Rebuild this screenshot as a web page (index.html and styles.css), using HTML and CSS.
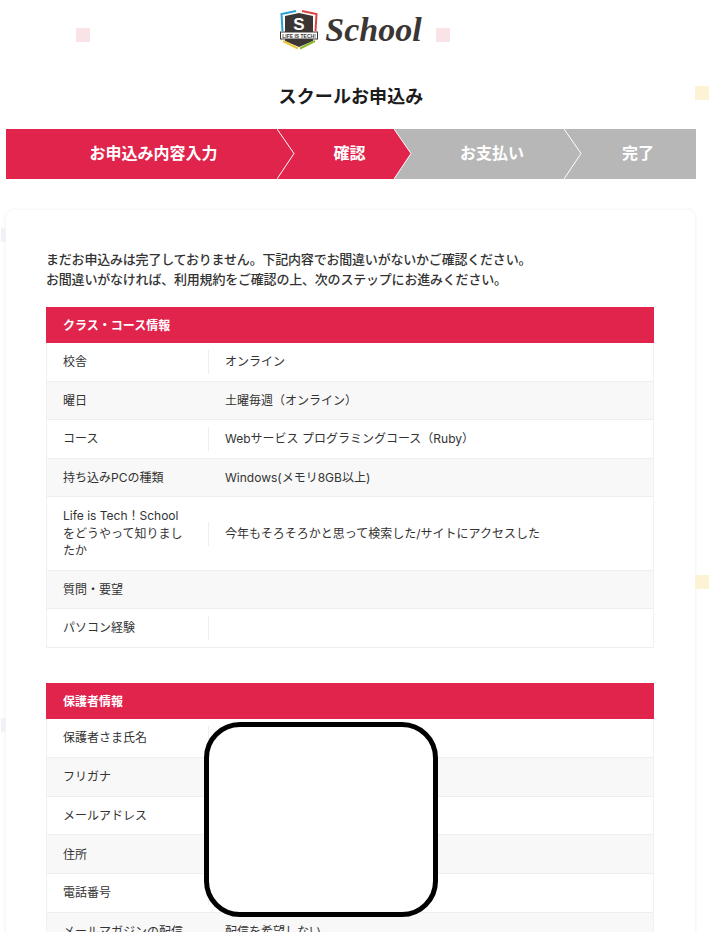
FILE: index.html
```html
<!DOCTYPE html>
<html lang="ja">
<head>
  <meta charset="UTF-8" />
  <meta name="viewport" content="width=device-width, initial-scale=1.0"/>
  <title>スクールお申込み</title>
  <link rel="stylesheet" href="styles.css">
</head>
<body>
  <!-- background confetti -->
  <span class="dot dot-pink dot-a"></span>
  <span class="dot dot-pink dot-b"></span>
  <span class="dot dot-cream dot-c"></span>
  <span class="dot dot-cream dot-d"></span>
  <span class="dot dot-grey dot-e"></span>
  <span class="dot dot-grey dot-f"></span>

  <div class="container">
    <header class="logo">
      <svg class="logo-mark" width="38" height="40" viewBox="0 0 38 40">
        <path d="M5 6 L19 3 L33 6 L33 31 L19 37 L5 31 Z" fill="#3b3634"/>
        <path d="M2.5 21 L1.5 4 L16 1" fill="none" stroke="#2a9fd6" stroke-width="2"/>
        <path d="M35.5 21 L36.5 4 L22 1" fill="none" stroke="#e0403f" stroke-width="2"/>
        <path d="M3 31 L18 38.5" fill="none" stroke="#f0c43a" stroke-width="2"/>
        <path d="M35 31 L20 38.5" fill="none" stroke="#8cb82b" stroke-width="2"/>
        <text x="19" y="19.5" class="logo-s">S</text>
        <rect x="0.5" y="22" width="37" height="7" fill="#fff" stroke="#3b3634"/>
        <text x="19" y="27.6" class="logo-small">LIFE IS TECH!</text>
      </svg>
      <span class="logo-word">School</span>
    </header>

    <h1>スクールお申込み</h1>

    <ol class="steps">
      <li class="step step-1 active">
        お申込み内容入力
        <svg class="tip" width="18" height="50" viewBox="0 0 18 50"><path d="M0 0 L17 24.5 L0 50 Z" fill="#e1244c"/><path d="M0 0 L17 24.5 L0 50" fill="none" stroke="#fff"/></svg>
      </li>
      <li class="step step-2 active">
        確認
        <svg class="tip" width="18" height="50" viewBox="0 0 18 50"><path d="M0 0 L17 24.5 L0 50 Z" fill="#e1244c"/><path d="M0 0 L17 24.5 L0 50" fill="none" stroke="#fff"/></svg>
      </li>
      <li class="step step-3">
        お支払い
        <svg class="tip" width="18" height="50" viewBox="0 0 18 50"><path d="M0 0 L17 24.5 L0 50 Z" fill="#b7b7b7"/><path d="M0 0 L17 24.5 L0 50" fill="none" stroke="#fff"/></svg>
      </li>
      <li class="step step-4">完了</li>
    </ol>

    <main class="card">
      <p class="lead">まだお申込みは完了しておりません。下記内容でお間違いがないかご確認ください。<br>お間違いがなければ、利用規約をご確認の上、次のステップにお進みください。</p>

      <section class="info">
        <h2>クラス・コース情報</h2>
        <div class="row"><div class="key">校舎</div><div class="val">オンライン</div></div>
        <div class="row"><div class="key">曜日</div><div class="val">土曜毎週（オンライン）</div></div>
        <div class="row"><div class="key">コース</div><div class="val">Webサービス プログラミングコース（Ruby）</div></div>
        <div class="row"><div class="key">持ち込みPCの種類</div><div class="val">Windows(メモリ8GB以上)</div></div>
        <div class="row"><div class="key">Life is Tech！School をどうやって知りましたか</div><div class="val">今年もそろそろかと思って検索した/サイトにアクセスした</div></div>
        <div class="row"><div class="key">質問・要望</div><div class="val"></div></div>
        <div class="row"><div class="key">パソコン経験</div><div class="val"></div></div>
      </section>

      <section class="info info-guardian">
        <h2>保護者情報</h2>
        <div class="row"><div class="key">保護者さま氏名</div><div class="val"></div></div>
        <div class="row"><div class="key">フリガナ</div><div class="val"></div></div>
        <div class="row"><div class="key">メールアドレス</div><div class="val"></div></div>
        <div class="row"><div class="key">住所</div><div class="val"></div></div>
        <div class="row"><div class="key">電話番号</div><div class="val"></div></div>
        <div class="row"><div class="key">メールマガジンの配信</div><div class="val">配信を希望しない</div></div>
      </section>
    </main>
  </div>

  <!-- hand drawn blank over the personal details -->
  <div class="redact"></div>
</body>
</html>
```

FILE: styles.css
```css
html, body {
  height: 932px;
  overflow: hidden;
}

body {
  position: relative;
  margin: 0;
  background: #fff;
  color: #333;
  font-family: "Noto Sans CJK JP", "Noto Sans", sans-serif;
  font-size: 12px;
}

.container {
  width: 690px;
  margin-left: 6px;
}

.dot {
  position: absolute;
  width: 14px;
  height: 14px;
}

.dot-pink { background: #f9e3e6; }
.dot-cream { background: #fbf3d3; }
.dot-grey { background: #f0f2f5; width: 5px; }

.dot-a { left: 76px; top: 28px; }
.dot-b { left: 436px; top: 28px; }
.dot-c { left: 695px; top: 86px; }
.dot-d { left: 695px; top: 575px; }
.dot-e { left: 1px; top: 228px; }
.dot-f { left: 1px; top: 718px; }

.logo {
  display: flex;
  justify-content: center;
  align-items: center;
  gap: 7px;
  height: 40px;
  padding: 10px 0 6px;
}

.logo-s {
  fill: #fff;
  font-family: "Liberation Sans", sans-serif;
  font-size: 17px;
  font-weight: bold;
  text-anchor: middle;
}

.logo-small {
  fill: #3b3634;
  font-family: "Liberation Sans", sans-serif;
  font-size: 5px;
  font-weight: bold;
  text-anchor: middle;
}

.logo-word {
  color: #3b3634;
  font-family: "Liberation Serif", serif;
  font-size: 34px;
  font-style: italic;
  font-weight: bold;
  line-height: 40px;
}

h1 {
  position: relative;
  margin: 26px 0 21px;
  color: #1c1c1c;
  font-size: 18px;
  font-weight: 700;
  line-height: 26px;
  letter-spacing: 0.1px;
  text-align: center;
}

.steps {
  display: flex;
  height: 50px;
  margin: 0;
  padding: 0;
  list-style: none;
  color: #fff;
  font-size: 16px;
  font-weight: 700;
}

.step {
  position: relative;
  box-sizing: border-box;
  background: #b7b7b7;
  line-height: 46px;
  text-align: center;
}

.step.active { background: #e1244c; }

.step-1 { width: 271px; padding-left: 24px; }
.step-2 { width: 117px; padding-left: 28px; }
.step-3 { width: 170px; padding-left: 26px; }
.step-4 { width: 132px; padding-left: 16px; }

.tip {
  position: absolute;
  top: 0;
  left: 100%;
  z-index: 1;
}

.card {
  box-sizing: border-box;
  width: 689px;
  margin-top: 31px;
  padding: 39px 40px 40px;
  background: #fff;
  border-radius: 8px;
  box-shadow: 0 0 4px rgba(0, 0, 0, 0.07);
}

.lead {
  margin: 0 0 18px;
  font-size: 13px;
  font-weight: 500;
  line-height: 20px;
  letter-spacing: -0.2px;
}

.info {
  box-sizing: border-box;
  width: 608px;
  margin-bottom: 35.5px;
  border: solid #f1f1f1;
  border-width: 0 1px;
  font-family: Inter, "Noto Sans CJK JP", sans-serif;
}

.info h2 {
  margin: 0 -1px;
  padding: 0 17px;
  background: #e1244c;
  color: #fff;
  font-family: "Noto Sans CJK JP", sans-serif;
  font-size: 12px;
  font-weight: 700;
  line-height: 36px;
}

.row {
  display: flex;
  align-items: center;
  padding: 10.25px 0 9.75px;
  border-bottom: 1px solid #eee;
  line-height: 17.5px;
}

.info-guardian .row { line-height: 17.75px; }

.row:nth-of-type(even) { background: #f8f8f8; }

.key {
  box-sizing: border-box;
  flex: 0 0 161px;
  padding: 0 23px 0 16px;
}

.val {
  flex: 1;
  display: flex;
  align-items: center;
  min-height: 24px;
  margin: -3.25px 0;
  padding-left: 16px;
  border-left: 1px solid #eee;
}

.row:nth-of-type(even) .val { border-left-color: #f8f8f8; }

.redact {
  position: absolute;
  left: 204px;
  top: 722px;
  box-sizing: border-box;
  width: 234px;
  height: 195px;
  background: #fff;
  border: 5px solid #000;
  border-radius: 36px;
}
```
